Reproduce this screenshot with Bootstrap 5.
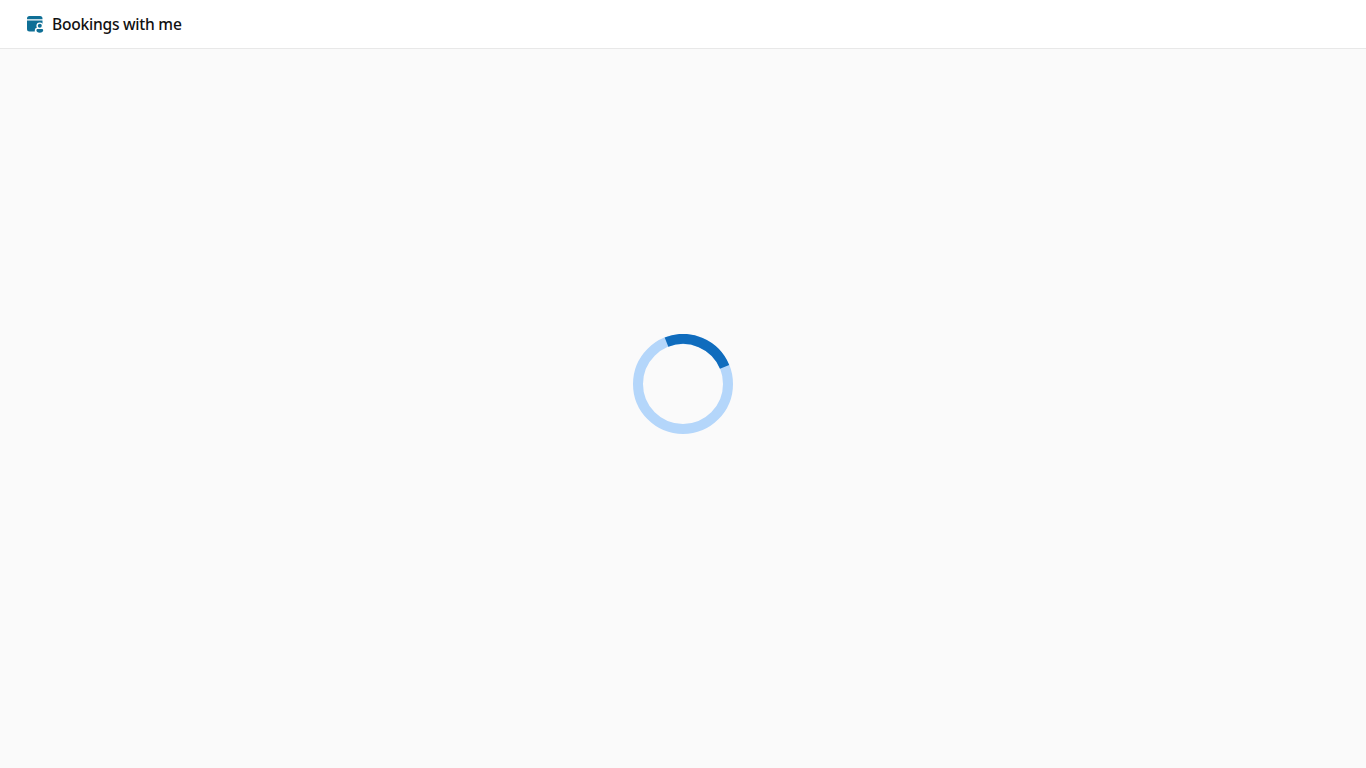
<!DOCTYPE html>
<html lang="en">
<head>
<meta charset="utf-8">
<title>Bookings with me</title>
<link href="https://cdn.jsdelivr.net/npm/bootstrap@5.3.0/dist/css/bootstrap.min.css" rel="stylesheet">
<style>
html, body { height: 100%; }
body { background: #fafafa; font-family: "Noto Sans", sans-serif; overflow: hidden; }
.top-head { height: 49px; background: #fff; border-bottom: 1px solid #e8e8e8; padding-left: 27px; }
.top-title { font-size: 15.6px; font-weight: 500; color: #111; letter-spacing: -.25px; margin-left: 8px; line-height: 1; padding-top: 2px; }
.logo-ico { width: 17px; height: 17px; flex: none; }
.loader-ico { width: 100px; height: 100px; flex: none; }
</style>
</head>
<body class="position-relative">
<header class="top-head d-flex align-items-center">
  <svg class="logo-ico" viewBox="0 0 17 17" aria-hidden="true">
    <path fill="#0f6f96" d="M2.5 0h10.5a2.5 2.5 0 0 1 2.5 2.5V3.2H0v-.7A2.5 2.5 0 0 1 2.5 0z"></path>
    <path fill="#0f6f96" d="M0 4.6h15.5V13a2.5 2.5 0 0 1-2.5 2.5H2.5A2.5 2.5 0 0 1 0 13z"></path>
    <circle cx="12.8" cy="9.8" r="3.4" fill="#fff"></circle>
    <path fill="#fff" d="M7.8 17v-2.5a3 3 0 0 1 3-3H17V17z"></path>
    <circle cx="12.8" cy="9.8" r="2" fill="#0f6f96"></circle>
    <path fill="#0f6f96" d="M9.4 14.3c0-.9.7-1.4 1.5-1.4h3.8c.8 0 1.5.5 1.5 1.4 0 1.6-1.4 2.5-3.4 2.5s-3.4-.9-3.4-2.5z"></path>
  </svg>
  <span class="top-title">Bookings with me</span>
</header>
<div class="position-absolute top-50 start-50 translate-middle d-flex" role="status">
  <svg class="loader-ico" viewBox="0 0 100 100" aria-label="Loading">
    <circle cx="50" cy="50" r="45" fill="none" stroke="#b4d6fa" stroke-width="10"></circle>
    <path d="M33.5 8.13A45 45 0 0 1 91.6 32.8" fill="none" stroke="#0f6cbd" stroke-width="10"></path>
  </svg>
</div>
<script src="https://cdn.jsdelivr.net/npm/bootstrap@5.3.0/dist/js/bootstrap.bundle.min.js"></script>
</body>
</html>
